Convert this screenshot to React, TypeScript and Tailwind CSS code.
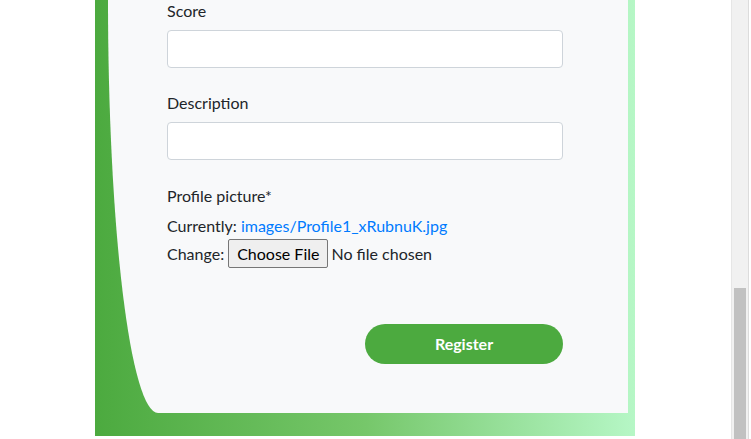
import React, { FC } from 'react';

const font = { fontFamily: 'Lato, "Open Sans", sans-serif' };

const Field: FC<{ label: string; className?: string }> = ({ label, className }) => (
    <div className={`flex flex-col ${className ?? ''}`}>
        <label className="pt-[1px] leading-6 mb-[7px] text-[16px] text-[#212529]">{label}</label>
        <input
            type="text"
            className="h-[38px] w-full rounded-[4px] border border-[#ced4da] bg-white px-3 outline-none"
        />
    </div>
);

const App: FC = () => {
    return (
        <div className="flex h-[439px] w-[751px] overflow-hidden bg-white" style={font}>
            <div className="w-[95px] shrink-0" />
            {/* green card with curved inner panel */}
            <div className="flex h-[436px] w-[540px] shrink-0 flex-col bg-gradient-to-r from-[#4caa3f] via-[#76c76a] to-[#b6f7c6] pl-[13px] pr-[7px] pb-[23px]">
                <div className="flex flex-1 flex-col rounded-bl-[50px_413px] bg-[#f8f9fa] pl-[59px] pr-[65px]">
                    <Field label="Score" className="mt-[-2px]" />
                    <Field label="Description" className="mt-[22px]" />
                    <p className="mt-[24px] leading-6 text-[16px] text-[#212529]">Profile picture*</p>
                    <p className="mt-[6px] leading-6 text-[16px] text-[#212529]">
                        Currently: <a className="text-[#007bff]">images/Profile1_xRubnuK.jpg</a>
                    </p>
                    <div className="mt-[1px] flex h-[29px] items-center text-[16px] text-[#212529]">
                        <span>Change:</span>
                        <button className="ml-[4px] h-[29px] rounded-[2px] border border-[#767676] bg-[#efefef] px-[8px] text-[16px] leading-none text-[#000]">
                            Choose File
                        </button>
                        <span className="ml-[3px]">No file chosen</span>
                    </div>
                    <div className="mt-[56px] flex justify-end">
                        <button className="h-[40px] w-[198px] rounded-full bg-[#4caa3f] text-[16px] font-bold text-white">
                            Register
                        </button>
                    </div>
                </div>
            </div>
            <div className="flex-1" />
            {/* page scrollbar */}
            <div className="flex w-[20px] shrink-0">
                <div className="flex w-[17px] flex-col border-l border-[#e6e6e6] bg-[#f1f1f1] px-[2px]">
                    <div className="h-[288px]" />
                    <div className="flex-1 bg-[#c1c1c1]" />
                </div>
                <div className="w-[3px] border-l border-[#dcdcdc] bg-white" />
            </div>
        </div>
    );
};

export default App;
